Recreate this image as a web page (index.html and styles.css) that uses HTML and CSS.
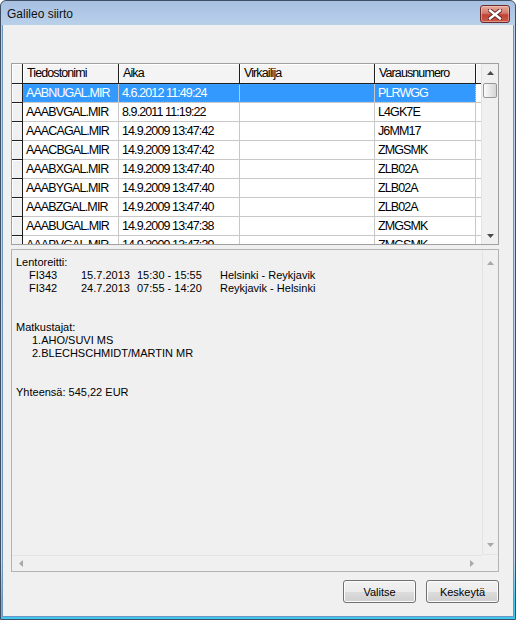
FILE: index.html
```html
<!DOCTYPE html>
<html lang="fi">
<head>
    <meta charset="UTF-8">
    <title>Galileo siirto</title>
    <link rel="stylesheet" href="styles.css">
</head>
<body>
    <div class="window">
        <div class="titlebar">
            <span class="title">Galileo siirto</span>
            <div class="close-btn">
                <svg width="14" height="11" viewBox="0 0 14 11">
                    <path d="M2 1.5 L12 9.5 M12 1.5 L2 9.5" stroke="#5a2020" stroke-width="4.2" stroke-linecap="square"/>
                    <path d="M2 1.5 L12 9.5 M12 1.5 L2 9.5" stroke="#fff" stroke-width="2.4" stroke-linecap="square"/>
                </svg>
            </div>
        </div>

        <div class="client">
            <div class="grid">
                <div class="grid-body">
                    <div class="row head">
                        <div class="cell rh"></div>
                        <div class="cell">Tiedostonimi</div>
                        <div class="cell">Aika</div>
                        <div class="cell">Virkailija</div>
                        <div class="cell">Varausnumero</div>
                        <div class="cell fill"></div>
                    </div>
                    <div class="row selected">
                        <div class="cell rh"></div>
                        <div class="cell">AABNUGAL.MIR</div>
                        <div class="cell">4.6.2012 11:49:24</div>
                        <div class="cell"></div>
                        <div class="cell">PLRWGG</div>
                        <div class="cell fill"></div>
                    </div>
                    <div class="row">
                        <div class="cell rh"></div>
                        <div class="cell">AAABVGAL.MIR</div>
                        <div class="cell">8.9.2011 11:19:22</div>
                        <div class="cell"></div>
                        <div class="cell">L4GK7E</div>
                        <div class="cell fill"></div>
                    </div>
                    <div class="row">
                        <div class="cell rh"></div>
                        <div class="cell">AAACAGAL.MIR</div>
                        <div class="cell">14.9.2009 13:47:42</div>
                        <div class="cell"></div>
                        <div class="cell">J6MM17</div>
                        <div class="cell fill"></div>
                    </div>
                    <div class="row">
                        <div class="cell rh"></div>
                        <div class="cell">AAACBGAL.MIR</div>
                        <div class="cell">14.9.2009 13:47:42</div>
                        <div class="cell"></div>
                        <div class="cell">ZMGSMK</div>
                        <div class="cell fill"></div>
                    </div>
                    <div class="row">
                        <div class="cell rh"></div>
                        <div class="cell">AAABXGAL.MIR</div>
                        <div class="cell">14.9.2009 13:47:40</div>
                        <div class="cell"></div>
                        <div class="cell">ZLB02A</div>
                        <div class="cell fill"></div>
                    </div>
                    <div class="row">
                        <div class="cell rh"></div>
                        <div class="cell">AAABYGAL.MIR</div>
                        <div class="cell">14.9.2009 13:47:40</div>
                        <div class="cell"></div>
                        <div class="cell">ZLB02A</div>
                        <div class="cell fill"></div>
                    </div>
                    <div class="row">
                        <div class="cell rh"></div>
                        <div class="cell">AAABZGAL.MIR</div>
                        <div class="cell">14.9.2009 13:47:40</div>
                        <div class="cell"></div>
                        <div class="cell">ZLB02A</div>
                        <div class="cell fill"></div>
                    </div>
                    <div class="row">
                        <div class="cell rh"></div>
                        <div class="cell">AAABUGAL.MIR</div>
                        <div class="cell">14.9.2009 13:47:38</div>
                        <div class="cell"></div>
                        <div class="cell">ZMGSMK</div>
                        <div class="cell fill"></div>
                    </div>
                    <div class="row">
                        <div class="cell rh"></div>
                        <div class="cell">AAABVGAL.MIR</div>
                        <div class="cell">14.9.2009 13:47:39</div>
                        <div class="cell"></div>
                        <div class="cell">ZMGSMK</div>
                        <div class="cell fill"></div>
                    </div>
                </div>
                <div class="vscroll">
                    <div class="sb-btn">
                        <svg width="7" height="4" viewBox="0 0 7 4"><polygon points="0,4 7,4 3.5,0" fill="#4a4a4a"/></svg>
                    </div>
                    <div class="thumb"></div>
                    <div class="sb-track"></div>
                    <div class="sb-btn">
                        <svg width="7" height="4" viewBox="0 0 7 4"><polygon points="0,0 7,0 3.5,4" fill="#4a4a4a"/></svg>
                    </div>
                </div>
            </div>

            <div class="memo">
                <div class="memo-text">
                    <div class="line">Lentoreitti:</div>
                    <div class="line flight"><span class="fno">FI343</span><span class="fdate">15.7.2013</span><span class="ftime">15:30 - 15:55</span><span>Helsinki - Reykjavik</span></div>
                    <div class="line flight"><span class="fno">FI342</span><span class="fdate">24.7.2013</span><span class="ftime">07:55 - 14:20</span><span>Reykjavik - Helsinki</span></div>
                    <div class="line"></div>
                    <div class="line"></div>
                    <div class="line">Matkustajat:</div>
                    <div class="line pax">1.AHO/SUVI MS</div>
                    <div class="line pax">2.BLECHSCHMIDT/MARTIN MR</div>
                    <div class="line"></div>
                    <div class="line"></div>
                    <div class="line">Yhteensä: 545,22 EUR</div>
                </div>
                <div class="memo-vscroll">
                    <svg width="7" height="4" viewBox="0 0 7 4"><polygon points="0,4 7,4 3.5,0" fill="#a8a8a8"/></svg>
                    <svg width="7" height="4" viewBox="0 0 7 4"><polygon points="0,0 7,0 3.5,4" fill="#a8a8a8"/></svg>
                </div>
                <div class="memo-hscroll">
                    <svg width="4" height="7" viewBox="0 0 4 7"><polygon points="4,0 4,7 0,3.5" fill="#a8a8a8"/></svg>
                    <svg width="4" height="7" viewBox="0 0 4 7"><polygon points="0,0 0,7 4,3.5" fill="#a8a8a8"/></svg>
                </div>
                <div class="memo-corner"></div>
            </div>

            <div class="buttons">
                <button class="btn">Valitse</button>
                <button class="btn">Keskeytä</button>
            </div>
        </div>
    </div>
</body>
</html>
```

FILE: styles.css
```css
html, body { margin: 0; padding: 0; background: #fff; }
body { font-family: "Liberation Sans", Arial, sans-serif; }

.window {
    width: 516px;
    height: 620px;
    box-sizing: border-box;
    border: 1px solid #3e4f63;
    border-radius: 6px 6px 0 0;
    padding: 0 1px 2px 1px;
    background: linear-gradient(#a7c0e1 0, #bad1eb 25px, #c3d8ee 560px, #3fc7ef 600px, #3fc7ef 620px);
    display: flex;
    flex-direction: column;
}

.titlebar {
    height: 24px;
    display: flex;
    align-items: flex-start;
    justify-content: space-between;
}
.title {
    font-size: 12px;
    color: #101010;
    padding: 6px 0 0 5px;
}
.close-btn {
    width: 30px;
    height: 18px;
    margin: 4px 4px 0 0;
    box-sizing: border-box;
    border: 1px solid #6b2a2a;
    border-radius: 3px;
    background: linear-gradient(#e6ab9c 0, #d27a6a 45%, #c04434 55%, #c9594a 100%);
    box-shadow: inset 0 0 0 1px rgba(255, 220, 210, 0.45);
    display: flex;
    align-items: center;
    justify-content: center;
}

.client {
    flex: 1;
    background: #f0f0f0;
    border: 1px solid #6e94c0;
    border-top: none;
    padding: 38px 0 0 8px;
}

/* data grid */
.grid {
    width: 488px;
    height: 182px;
    box-sizing: border-box;
    border: 1px solid #a0a0a0;
    display: flex;
    background: #fff;
}
.grid-body {
    flex: 1;
    height: 180px;
    overflow: hidden;
    font-size: 12.5px;
    letter-spacing: -0.9px;
}
.row {
    display: grid;
    grid-template-columns: 11px 96px 121px 135px 101px 1fr;
    grid-template-rows: 100%;
    height: 19px;
}
.row > :nth-child(1) { grid-area: 1 / 1; }
.row > :nth-child(2) { grid-area: 1 / 2; }
.row > :nth-child(3) { grid-area: 1 / 3; }
.row > :nth-child(4) { grid-area: 1 / 4; }
.row > :nth-child(5) { grid-area: 1 / 5; }
.row > :nth-child(6) { grid-area: 1 / 6; }
.cell {
    box-sizing: border-box;
    border-right: 1px solid #c8c8c8;
    border-bottom: 1px solid #c8c8c8;
    padding: 0 3px;
    line-height: 18px;
    white-space: nowrap;
    overflow: hidden;
    color: #000;
}
.cell.fill { border-right: none; }
.cell.rh {
    background: #f0f0f0;
    border-right: 1px solid #1e1e1e;
    border-bottom: 1px solid #1e1e1e;
    box-shadow: inset 1px 1px 0 #fff;
    padding: 0;
}
.row.head { height: 20px; }
.row.head .cell {
    background: #f4f4f4;
    border-right: 1px solid #1e1e1e;
    border-bottom: 1px solid #1e1e1e;
    box-shadow: inset 1px 1px 0 #fff;
    line-height: 19px;
    padding-left: 4px;
}
.row.head .cell.fill { border-right: none; }
.row.selected .cell:not(.rh):not(.fill) {
    background: #3399ff;
    color: #fff;
}
.row.selected::after {
    content: "";
    grid-area: 1 / 2 / 2 / 6;
    border: 1px dotted #e7851c;
    height: 18px;
    box-sizing: border-box;
}

.vscroll {
    width: 17px;
    display: flex;
    flex-direction: column;
    background: #f0f0f0;
    border-left: 1px solid #e3e3e3;
    box-sizing: border-box;
}
.sb-btn {
    height: 17px;
    display: flex;
    align-items: center;
    justify-content: center;
}
.thumb {
    height: 15px;
    margin: 2px 1px 0 1px;
    border: 1px solid #979797;
    border-radius: 2px;
    background: linear-gradient(to right, #fafafa, #e4e4e4 60%, #d6d6d6);
    box-sizing: border-box;
}
.sb-track { flex: 1; }

/* info memo */
.memo {
    width: 488px;
    height: 323px;
    margin-top: 4px;
    box-sizing: border-box;
    border: 1px solid #b4b4b4;
    background: #f0f0f0;
    display: grid;
    grid-template-columns: 1fr 16px;
    grid-template-rows: 1fr 16px;
}
.memo-text {
    padding: 6px 0 0 4px;
    font-size: 11px;
    color: #000;
}
.line { height: 13px; line-height: 13px; white-space: nowrap; }
.flight { padding-left: 13px; }
.fno { display: inline-block; width: 52px; }
.fdate { display: inline-block; width: 56px; }
.ftime { display: inline-block; width: 83px; }
.pax { padding-left: 16px; }

.memo-vscroll {
    border-left: 1px solid #e4e4e4;
    border-bottom: 1px solid #e4e4e4;
    display: flex;
    flex-direction: column;
    justify-content: space-between;
    align-items: center;
    padding: 11px 0 7px 0;
}
.memo-hscroll {
    border-top: 1px solid #e4e4e4;
    display: flex;
    align-items: center;
    justify-content: space-between;
    padding: 0 8px 0 7px;
}
.memo-corner { background: #f0f0f0; }

.buttons {
    width: 488px;
    margin-top: 8px;
    display: flex;
    justify-content: flex-end;
    gap: 10px;
}
.btn {
    width: 73px;
    height: 23px;
    font-family: "Liberation Sans", Arial, sans-serif;
    font-size: 11px;
    color: #000;
    border: 1px solid #707070;
    border-radius: 3px;
    background: linear-gradient(#f2f2f2 0, #ebebeb 50%, #dddddd 51%, #cfcfcf 100%);
    box-shadow: inset 0 0 0 1px #fcfcfc;
    padding: 0;
}
```
